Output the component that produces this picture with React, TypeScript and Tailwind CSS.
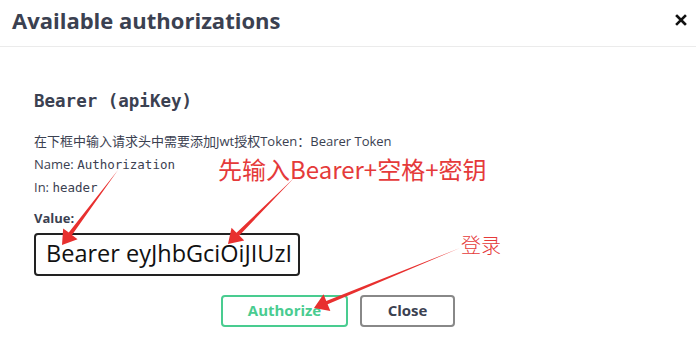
import React from "react";

function Arrow({ x1, y1, x2, y2, w = 4, head = 14, hw = 9 }: { x1: number; y1: number; x2: number; y2: number; w?: number; head?: number; hw?: number }) {
  const dx = x2 - x1;
  const dy = y2 - y1;
  const len = Math.hypot(dx, dy);
  const ux = dx / len;
  const uy = dy / len;
  const px = -uy;
  const py = ux;
  const bx = x2 - ux * head;
  const by = y2 - uy * head;
  const pts = [
    [x1, y1],
    [bx + px * (w / 2), by + py * (w / 2)],
    [bx + px * hw, by + py * hw],
    [x2, y2],
    [bx - px * hw, by - py * hw],
    [bx - px * (w / 2), by - py * (w / 2)],
  ]
    .map((p) => p.join(","))
    .join(" ");
  return <polygon points={pts} fill="#e8302f" />;
}

export default function App() {
  return (
    <div className="relative w-[696px] h-[348px] bg-white overflow-hidden font-['Open_Sans','Noto_Sans_CJK_SC',sans-serif] text-[#3b4151]">
      <div className="flex items-center justify-between h-[47px] pl-[12px] pr-[9px] border-b border-[#ebebeb]">
        <h3 className="text-[22px] font-bold text-[#3b4151] leading-none -mt-[6px]">Available authorizations</h3>
        <svg width="12" height="12" viewBox="0 0 12 12" className="-mt-[6px]">
          <path d="M2 2 L10 10 M10 2 L2 10" stroke="#111" strokeWidth="2.6" strokeLinecap="square" />
        </svg>
      </div>
      <div className="pl-[34px] pt-[46px]">
        <h4 className="font-['DejaVu_Sans_Mono',monospace] font-bold text-[17.5px] leading-none text-[#3b4151]">Bearer (apiKey)</h4>
        <div className="mt-[19px] text-[13px] leading-[23px] text-[#3b4151]">
          <p>在下框中输入请求头中需要添加Jwt授权Token：Bearer Token</p>
          <p>
            Name: <code className="font-['DejaVu_Sans_Mono',monospace] text-[12.5px]">Authorization</code>
          </p>
          <p>
            In: <code className="font-['DejaVu_Sans_Mono',monospace] text-[12.5px]">header</code>
          </p>
        </div>
        <label className="block mt-[13px] text-[13px] font-bold leading-none">Value:</label>
        <div className="mt-[8px] w-[266px] h-[43px] border-2 border-[#222] rounded-[4px] flex items-center pl-[10px] text-[23.5px] text-[#111] font-['Open_Sans',sans-serif] whitespace-nowrap overflow-hidden">
          Bearer eyJhbGciOiJIUzI
        </div>
        <div className="flex gap-[12px] mt-[19px] ml-[187px]">
          <button className="w-[127px] h-[32px] border-2 border-[#49cc90] rounded-[4px] text-[#49cc90] font-bold text-[15px]">Authorize</button>
          <button className="w-[95px] h-[32px] border-2 border-[#888] rounded-[4px] text-[#3b4151] font-bold text-[15px]">Close</button>
        </div>
      </div>
      <div className="absolute left-[218px] top-[157px] text-[24px] leading-none text-[#e53a3a] font-['Noto_Sans_CJK_SC',sans-serif]">先输入Bearer+空格+密钥</div>
      <div className="absolute left-[461px] top-[235px] text-[20px] leading-none text-[#e53a3a] font-['Noto_Sans_CJK_SC',sans-serif] font-light">登录</div>
      <svg className="absolute left-0 top-0 pointer-events-none" width="696" height="348">
        <Arrow x1={118} y1={170} x2={62} y2={245} />
        <Arrow x1={294} y1={178} x2={228} y2={244} />
        <Arrow x1={460} y1={248} x2={314} y2={308} w={3.5} />
      </svg>
    </div>
  );
}
